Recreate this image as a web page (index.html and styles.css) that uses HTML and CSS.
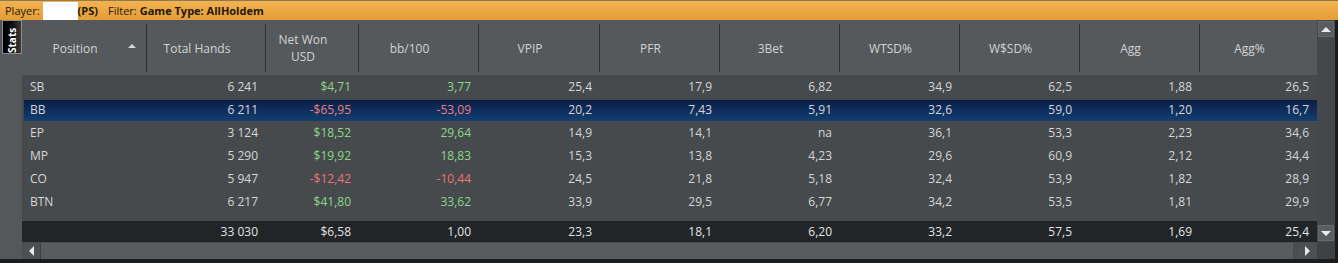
FILE: index.html
```html
<!DOCTYPE html>
<html lang="en">

<head>
    <meta charset="UTF-8">
    <title>Stats - Position</title>
    <link rel="stylesheet" href="styles.css">
</head>

<body>
    <div class="topbar">
        <span>Player:</span><span class="player-box"></span><b>(PS)</b>
        <span class="filter">Filter:</span><b>Game Type: AllHoldem</b>
    </div>

    <div class="main">
        <div class="side">
            <div class="stats-tab"><span>Stats</span></div>
        </div>

        <div class="grid">
            <div class="head">
                <div class="hc sorted">Position<i class="sort-arrow"></i></div>
                <div class="hc">Total Hands</div>
                <div class="hc">Net Won<br>USD</div>
                <div class="hc">bb/100</div>
                <div class="hc">VPIP</div>
                <div class="hc">PFR</div>
                <div class="hc">3Bet</div>
                <div class="hc">WTSD%</div>
                <div class="hc">W$SD%</div>
                <div class="hc">Agg</div>
                <div class="hc last">Agg%</div>
            </div>

            <div class="rows">
                <div class="row">
                    <span class="pos">SB</span><span>6 241</span><span class="win">$4,71</span><span class="win">3,77</span>
                    <span>25,4</span><span>17,9</span><span>6,82</span><span>34,9</span><span>62,5</span><span>1,88</span><span>26,5</span>
                </div>
                <div class="row selected">
                    <span class="pos">BB</span><span>6 211</span><span class="loss">-$65,95</span><span class="loss">-53,09</span>
                    <span>20,2</span><span>7,43</span><span>5,91</span><span>32,6</span><span>59,0</span><span>1,20</span><span>16,7</span>
                </div>
                <div class="row">
                    <span class="pos">EP</span><span>3 124</span><span class="win">$18,52</span><span class="win">29,64</span>
                    <span>14,9</span><span>14,1</span><span>na</span><span>36,1</span><span>53,3</span><span>2,23</span><span>34,6</span>
                </div>
                <div class="row">
                    <span class="pos">MP</span><span>5 290</span><span class="win">$19,92</span><span class="win">18,83</span>
                    <span>15,3</span><span>13,8</span><span>4,23</span><span>29,6</span><span>60,9</span><span>2,12</span><span>34,4</span>
                </div>
                <div class="row">
                    <span class="pos">CO</span><span>5 947</span><span class="loss">-$12,42</span><span class="loss">-10,44</span>
                    <span>24,5</span><span>21,8</span><span>5,18</span><span>32,4</span><span>53,9</span><span>1,82</span><span>28,9</span>
                </div>
                <div class="row">
                    <span class="pos">BTN</span><span>6 217</span><span class="win">$41,80</span><span class="win">33,62</span>
                    <span>33,9</span><span>29,5</span><span>6,77</span><span>34,2</span><span>53,5</span><span>1,81</span><span>29,9</span>
                </div>
            </div>

            <div class="row total">
                <span class="pos"></span><span>33 030</span><span>$6,58</span><span>1,00</span>
                <span>23,3</span><span>18,1</span><span>6,20</span><span>33,2</span><span>57,5</span><span>1,69</span><span>25,4</span>
            </div>

            <div class="hscroll">
                <div class="sbtn"><i class="arrow left"></i></div>
                <div class="thumb"></div>
                <div class="sbtn"><i class="arrow right"></i></div>
            </div>
        </div>

        <div class="vscroll">
            <div class="sbtn up"><i class="arrow top"></i></div>
            <div class="vtrack"></div>
            <div class="sbtn down"><i class="arrow bottom"></i></div>
            <div class="corner"></div>
        </div>
    </div>
</body>

</html>
```

FILE: styles.css
```css
* {
    margin: 0;
    padding: 0;
    box-sizing: border-box;
}

body {
    background-color: #1b1c1d;
    font-family: 'Open Sans', 'Noto Sans', sans-serif;
    font-size: 12px;
    color: #d6d6d6;
    width: 1338px;
    height: 263px;
    overflow: hidden;
}

/* filter bar */
.topbar {
    height: 20px;
    background: linear-gradient(to bottom, #f4b24f, #e39d39);
    display: flex;
    align-items: center;
    padding-left: 5px;
    font-size: 11px;
    color: #1f1707;
    border-top: 1px solid #8a7a5a;
}

.player-box {
    width: 35px;
    height: 18px;
    background-color: #fff;
    margin-left: 3px;
}

.topbar b {
    font-weight: 700;
}

.filter {
    margin-left: 10px;
    margin-right: 3px;
}

/* main area */
.main {
    display: flex;
    height: 239px;
}

.side {
    width: 22px;
    background-color: #55585b;
    padding: 0 0 0 2px;
}

.stats-tab {
    width: 20px;
    height: 34px;
    border: 1px solid #8c8c8c;
    background: linear-gradient(to right, #000 0%, #0d0d0d 50%, #3a3a3a 100%);
    display: flex;
    justify-content: center;
    padding-top: 4px;
}

.stats-tab span {
    writing-mode: vertical-rl;
    transform: rotate(180deg);
    color: #fff;
    font-size: 10px;
    font-weight: 700;
    line-height: 16px;
}

.grid {
    width: 1295px;
    display: flex;
    flex-direction: column;
}

/* header */
.head {
    height: 55px;
    background-color: #56595c;
    display: grid;
    grid-template-columns: 125px 119px 93px 120px 121px 120px 120px 120px 120px 120px 117px;
}

.hc {
    margin: 4px 0 3px;
    border-right: 1px solid #2c2e30;
    display: flex;
    align-items: center;
    justify-content: center;
    text-align: center;
    padding-right: 18px;
    color: #d2d2d2;
    line-height: 17px;
    position: relative;
}

.hc.last {
    border-right: none;
}

.sort-arrow {
    position: absolute;
    right: 10px;
    top: 20px;
    border-left: 4px solid transparent;
    border-right: 4px solid transparent;
    border-bottom: 4px solid #d8d8d8;
}

/* rows */
.rows {
    height: 146px;
    background-color: #474a4d;
    padding-left: 2px;
}

.row {
    display: grid;
    grid-template-columns: 123px 119px 93px 120px 121px 120px 120px 120px 120px 120px 117px;
    height: 23px;
    line-height: 23px;
}

.row span {
    text-align: right;
    padding-right: 8px;
    white-space: nowrap;
}

.row .pos {
    text-align: left;
    padding-left: 6px;
}

.row.selected {
    background: linear-gradient(to bottom, #474a4d 0 2px, #0a1d48 2px, #133f70 100%);
}

.win {
    color: #8bd68b;
}

.loss {
    color: #ec7474;
}

.selected .loss {
    color: #f07e7e;
}

.row.total {
    height: 21px;
    line-height: 21px;
    background-color: #222528;
    color: #e2e2e2;
    grid-template-columns: 125px 119px 93px 120px 121px 120px 120px 120px 120px 120px 117px;
}

/* scrollbars */
.hscroll {
    height: 17px;
    display: flex;
    background-color: #4a4d50;
    padding: 1px 1px 0 1px;
}

.sbtn {
    width: 17px;
    height: 16px;
    background-color: #4d5053;
    display: flex;
    align-items: center;
    justify-content: center;
}

.thumb {
    flex: 1;
    background-color: #595c5f;
    border-left: 1px solid #3e4043;
    margin-right: 6px;
}

.vscroll {
    width: 18px;
    background-color: #45484b;
    display: flex;
    flex-direction: column;
    padding-left: 1px;
}

.vscroll .sbtn {
    width: 16px;
    height: 16px;
    background-color: #5a5d60;
    border: 1px solid #66696c;
}

.vscroll .up {
    margin-top: 1px;
}

.vtrack {
    flex: 1;
}

.vscroll .down {
    margin-bottom: 1px;
}

.corner {
    height: 17px;
    background-color: #3f4244;
    margin-left: -1px;
}

.arrow {
    width: 0;
    height: 0;
}

.arrow.left {
    border-top: 5px solid transparent;
    border-bottom: 5px solid transparent;
    border-right: 5px solid #e8e8e8;
}

.arrow.right {
    border-top: 5px solid transparent;
    border-bottom: 5px solid transparent;
    border-left: 5px solid #e8e8e8;
}

.arrow.top {
    border-left: 5px solid transparent;
    border-right: 5px solid transparent;
    border-bottom: 5px solid #eaeaea;
}

.arrow.bottom {
    border-left: 5px solid transparent;
    border-right: 5px solid transparent;
    border-top: 5px solid #eaeaea;
}
```
